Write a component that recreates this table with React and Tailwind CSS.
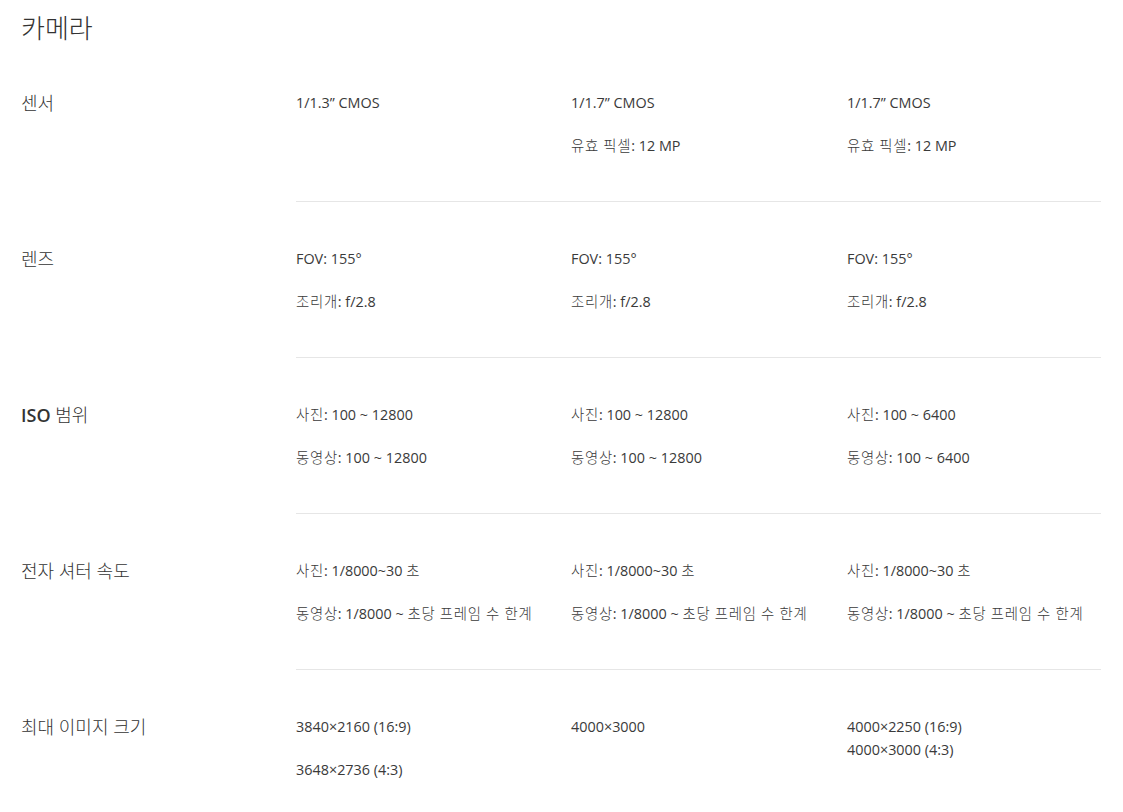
import React from 'react';

const rows = [
  {
    label: '센서',
    cols: [['1/1.3” CMOS'], ['1/1.7” CMOS', '유효 픽셀: 12 MP'], ['1/1.7” CMOS', '유효 픽셀: 12 MP']],
  },
  {
    label: '렌즈',
    cols: [
      ['FOV: 155°', '조리개: f/2.8'],
      ['FOV: 155°', '조리개: f/2.8'],
      ['FOV: 155°', '조리개: f/2.8'],
    ],
  },
  {
    label: (
      <>
        <span className="font-semibold">ISO</span> 범위
      </>
    ),
    cols: [
      ['사진: 100 ~ 12800', '동영상: 100 ~ 12800'],
      ['사진: 100 ~ 12800', '동영상: 100 ~ 12800'],
      ['사진: 100 ~ 6400', '동영상: 100 ~ 6400'],
    ],
  },
  {
    label: '전자 셔터 속도',
    cols: [
      ['사진: 1/8000~30 초', '동영상: 1/8000 ~ 초당 프레임 수 한계'],
      ['사진: 1/8000~30 초', '동영상: 1/8000 ~ 초당 프레임 수 한계'],
      ['사진: 1/8000~30 초', '동영상: 1/8000 ~ 초당 프레임 수 한계'],
    ],
  },
  {
    label: '최대 이미지 크기',
    cols: [['3840×2160 (16:9)', '3648×2736 (4:3)'], ['4000×3000'], [['4000×2250 (16:9)', '4000×3000 (4:3)']]],
    last: true,
  },
];

// Korean runs get the thinner, wider look of the reference
function Txt({ s }) {
  return s.split(/([가-힣]+(?: [가-힣]+)*)/).map((part, i) =>
    /[가-힣]/.test(part) ? (
      <span key={i} className="font-light tracking-[0.7px]">
        {part}
      </span>
    ) : (
      <span key={i}>{part}</span>
    )
  );
}

export default function App() {
  return (
    <div
      className="min-h-screen bg-white px-[21px] text-[#333]"
      style={{ fontFamily: '"Open Sans", "Noto Sans CJK KR", sans-serif' }}
    >
      <h1 className="pt-[10px] text-[26px] leading-[36px] font-light">카메라</h1>
      <div className="pt-[45px]">
        {rows.map((row, i) => (
          <div key={i} className="flex">
            <div className="w-[275px] shrink-0 text-[18px] leading-[24px] font-light">{row.label}</div>
            <div
              className={
                'w-[805px] grid grid-cols-[275px_276px_254px] pb-[43px] ' +
                (row.last ? '' : 'border-b border-[#e6e6e6] mb-[45px]')
              }
            >
              {row.cols.map((items, j) => (
                <div key={j} className="flex flex-col gap-[19px] text-[14.4px] leading-[24px] whitespace-nowrap text-[#3a3a3a]">
                  {items.map((t, k) =>
                    Array.isArray(t) ? (
                      <div key={k} className="leading-[23px]">
                        {t.map((s, m) => (
                          <div key={m}>
                            <Txt s={s} />
                          </div>
                        ))}
                      </div>
                    ) : (
                      <div key={k}>
                        <Txt s={t} />
                      </div>
                    )
                  )}
                </div>
              ))}
            </div>
          </div>
        ))}
      </div>
    </div>
  );
}
